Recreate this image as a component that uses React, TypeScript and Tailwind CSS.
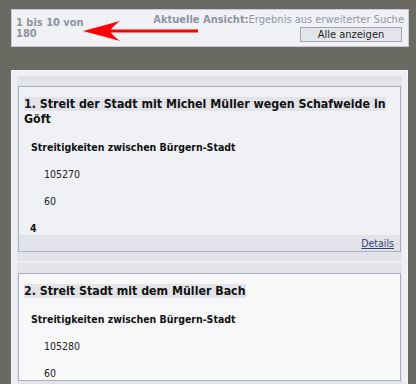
import React from "react";

type Item = {
  nr: number;
  title: string;
  rest?: string;
  category: string;
  number: string;
  value: string;
  extra?: string;
  active?: boolean;
};

const items: Item[] = [
  {
    nr: 1,
    title: "Streit der Stadt mit Michel Müller wegen Schafweide in ",
    rest: "Göft",
    category: "Streitigkeiten zwischen Bürgern-Stadt",
    number: "105270",
    value: "60",
    extra: "4",
    active: true,
  },
  {
    nr: 2,
    title: "Streit Stadt mit dem Müller Bach",
    category: "Streitigkeiten zwischen Bürgern-Stadt",
    number: "105280",
    value: "60",
  },
];

const Arrow: React.FC = () => (
  <svg className="absolute left-[60px] top-[2px]" width="130" height="32" viewBox="0 0 130 32">
    <path d="M36 17.5 L126 17.5 L126 20.5 L36 20.5 Z" fill="#ff0000" />
    <path d="M11 19 Q30 14 48 9 Q40 15 38 19 Q40 23 48 29 Q30 24 11 19 Z" fill="#ff0000" />
  </svg>
);

const ResultCard: React.FC<{ item: Item }> = ({ item }) => {
  return (
    <div className="bg-[#e2e3e8] px-px pt-[10px] pb-[9px]">
      <div
        className={`border border-[#a9b0c4] ${item.active ? "bg-[#f0f1f5]" : "bg-[#f8f8fa]"}`}
      >
        <div className="px-[5px] pt-[10px]">
          <div className="text-[12.3px] leading-[15px] font-bold text-[#111]">
            <span className="bg-[#e3e4e9]">
              {item.nr}. {item.title}
            </span>
            {item.rest && (
              <>
                <br />
                {item.rest}
              </>
            )}
          </div>
          <div className="mt-[14px] pl-[7px] text-[10.5px] leading-[13px] font-bold text-[#111]">
            {item.category}
          </div>
          <div className="mt-[14px] pl-[20px] text-[10.5px] leading-[13px] text-[#222]">
            {item.number}
          </div>
          <div className="mt-[14px] pl-[20px] text-[10.5px] leading-[13px] text-[#222]">
            {item.value}
          </div>
          {item.extra && (
            <div className="mt-[14px] pl-[6px] text-[10.5px] leading-[13px] font-bold text-[#111]">
              {item.extra}
            </div>
          )}
        </div>
        {item.active && (
          <div className="bg-[#e2e3e8] h-[16px] flex items-center justify-end pr-[6px]">
            <a href="#" className="text-[10.5px] leading-[13px] text-[#33407e] underline">
              Details
            </a>
          </div>
        )}
      </div>
    </div>
  );
};

export default function App() {
  return (
    <div
      className="w-[416px] h-[384px] overflow-hidden bg-[#6a6a62] pt-[9px] px-[11px]"
      style={{ fontFamily: '"DejaVu Sans Condensed", "DejaVu Sans", Verdana, sans-serif' }}
    >
      {/* Kopfzeile mit Trefferzahl */}
      <div className="relative w-[398px] h-[38px] bg-[#f0f1f5] border border-[#c9cad3] flex justify-between px-[4px]">
        <div className="w-[80px] pt-[7px] text-[11px] leading-[11px] font-bold text-[#8d93a5]">
          1 bis 10 von 180
        </div>
        <div className="flex flex-col items-end pt-[3px]">
          <div className="text-[11px] leading-[13px] text-[#9297a8] whitespace-nowrap">
            <span className="font-bold text-[#8d93a5]">Aktuelle Ansicht:</span>
            Ergebnis aus erweiterter Suche
          </div>
          <button className="mt-px w-[102px] h-[15px] bg-[#e4e5ea] border border-[#a3a5b0] text-[11px] leading-[13px] text-[#222] mr-[2px]">
            Alle anzeigen
          </button>
        </div>
        <Arrow />
      </div>

      {/* Trefferliste */}
      <div className="mt-[23px] w-[397px] bg-[#eeeff3] border-t border-x border-[#f4f5f8] p-[5px] flex flex-col gap-[2px] min-h-[320px]">
        {items.map((item) => (
          <ResultCard key={item.nr} item={item} />
        ))}
      </div>
    </div>
  );
}
